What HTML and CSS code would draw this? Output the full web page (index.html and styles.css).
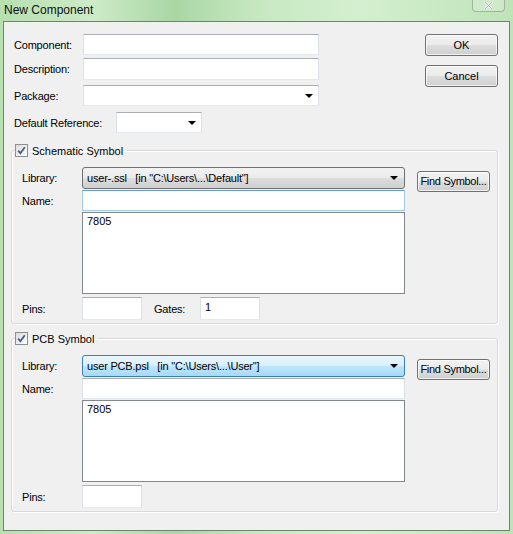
FILE: index.html
```html
<!DOCTYPE html>
<html lang="en">
<head>
    <meta charset="UTF-8">
    <title>New Component</title>
    <link rel="stylesheet" href="styles.css">
</head>
<body>
    <div class="titlebar">
        <span class="title">New Component</span>
        <span class="close">
            <svg width="11" height="9" viewBox="0 0 11 9"><path d="M2 1 L9 8 M9 1 L2 8" stroke="#f4f4f4" stroke-width="2.4"/><path d="M2 1 L9 8 M9 1 L2 8" stroke="#9aa79a" stroke-width="0.8"/></svg>
        </span>
    </div>

    <div class="client">
        <div class="top">
            <div class="fields">
                <div class="row r1">
                    <label class="lbl">Component:</label>
                    <div class="edit wide"></div>
                </div>
                <div class="row r2">
                    <label class="lbl">Description:</label>
                    <div class="edit wide tall"></div>
                </div>
                <div class="row r3">
                    <label class="lbl">Package:</label>
                    <div class="edit wide combo"><span class="arrow"></span></div>
                </div>
                <div class="row r4">
                    <label class="lbl ref">Default Reference:</label>
                    <div class="edit small combo"><span class="arrow"></span></div>
                </div>
            </div>
            <div class="actions">
                <button class="btn">OK</button>
                <button class="btn cancel">Cancel</button>
            </div>
        </div>

        <fieldset class="group">
            <legend>
                <span class="check"><svg width="9" height="9" viewBox="0 0 9 9"><path d="M1.2 4.6 L3.4 7.2 L7.8 1.2" fill="none" stroke="#4a5d8f" stroke-width="1.8"/></svg></span>
                Schematic Symbol
            </legend>
            <div class="grow lib">
                <label class="glbl">Library:</label>
                <div class="select"><span class="seltext">user-.ssl&nbsp;&nbsp;&nbsp;[in "C:\Users\...\Default"]</span><span class="arrow"></span></div>
                <button class="btn find">Find Symbol...</button>
            </div>
            <div class="grow name">
                <label class="glbl">Name:</label>
                <div class="edit field focus"></div>
            </div>
            <div class="list">7805</div>
            <div class="grow pins">
                <label class="glbl">Pins:</label>
                <div class="edit num"></div>
                <label class="gates">Gates:</label>
                <div class="edit num val">1</div>
            </div>
        </fieldset>

        <fieldset class="group pcb">
            <legend>
                <span class="check"><svg width="9" height="9" viewBox="0 0 9 9"><path d="M1.2 4.6 L3.4 7.2 L7.8 1.2" fill="none" stroke="#4a5d8f" stroke-width="1.8"/></svg></span>
                PCB Symbol
            </legend>
            <div class="grow lib">
                <label class="glbl">Library:</label>
                <div class="select hot"><span class="seltext">user PCB.psl&nbsp;&nbsp;&nbsp;[in "C:\Users\...\User"]</span><span class="arrow"></span></div>
                <button class="btn find">Find Symbol...</button>
            </div>
            <div class="grow name">
                <label class="glbl">Name:</label>
                <div class="edit field"></div>
            </div>
            <div class="list">7805</div>
            <div class="grow pins">
                <label class="glbl">Pins:</label>
                <div class="edit num"></div>
            </div>
        </fieldset>
    </div>
</body>
</html>
```

FILE: styles.css
```css
body {
    margin: 0;
    width: 513px;
    height: 534px;
    overflow: hidden;
    font-family: "Liberation Sans", Arial, sans-serif;
    font-size: 11px;
    color: #000;
    background: linear-gradient(to right, #b7dfb0 0%, #cdebc8 18%, #a9d6a3 34%, #c6e8c1 50%, #d4efcf 70%, #bfe3b9 100%);
}

/* title bar */
.titlebar {
    height: 21px;
    display: flex;
    align-items: flex-start;
    padding-left: 4px;
    box-sizing: border-box;
}

.title {
    font-size: 12px;
    margin-top: 3px;
    color: #111;
}

.close {
    margin-left: auto;
    margin-right: 8px;
    width: 33px;
    height: 12px;
    border: 1px solid #9fb59c;
    border-top: none;
    border-radius: 0 0 4px 4px;
    background: rgba(255, 255, 255, 0.2);
    display: flex;
    justify-content: center;
    align-items: flex-start;
    padding-top: 1px;
    box-sizing: border-box;
}

/* dialog body */
.client {
    margin: 0 3px;
    height: 510px;
    box-sizing: border-box;
    border: 1px solid #6d8669;
    background: #f0f0f0;
}

.top {
    display: flex;
    padding: 12px 11px 0 10px;
}

.fields {
    flex: 1;
}

.row {
    display: flex;
    align-items: center;
}

.r2 { margin-top: 3px; }
.r3 { margin-top: 5px; }
.r4 { margin-top: 6px; }

.lbl {
    width: 69px;
    letter-spacing: -0.2px;
}

.lbl.ref {
    width: 102px;
}

.edit {
    height: 21px;
    box-sizing: border-box;
    background: #fff;
    border: 1px solid #dbdfe6;
    border-top-color: #abadb3;
    border-bottom-color: #e3e9ef;
    position: relative;
}

.wide { width: 236px; }
.tall { height: 22px; }
.small { width: 86px; }

.combo .arrow {
    position: absolute;
    right: 5px;
    top: 8px;
}

.arrow {
    width: 0;
    height: 0;
    border-left: 4px solid transparent;
    border-right: 4px solid transparent;
    border-top: 4px solid #000;
}

.actions {
    display: flex;
    flex-direction: column;
    gap: 9px;
}

.btn {
    font-family: inherit;
    font-size: 11px;
    color: #000;
    border: 1px solid #707070;
    border-radius: 3px;
    background: linear-gradient(#f2f2f2 0%, #ebebeb 48%, #dddddd 52%, #cfcfcf 100%);
    box-shadow: inset 0 0 0 1px rgba(255, 255, 255, 0.7);
    padding: 0;
    width: 73px;
    height: 22px;
}

/* group boxes */
.group {
    margin: 11px 11px 0 7px;
    padding: 0 0 3px 0;
    border: 1px solid #d5d9dc;
    border-radius: 3px;
    min-width: 0;
    box-shadow: inset 1px 1px 0 #fff, 1px 1px 0 #fff;
}

.group.pcb {
    margin-top: 8px;
}

legend {
    display: flex;
    align-items: center;
    gap: 4px;
    margin-left: 3px;
    padding: 0 4px 0 0;
    height: 13px;
}

.check {
    width: 13px;
    height: 13px;
    box-sizing: border-box;
    border: 1px solid #8e8f8f;
    background: linear-gradient(135deg, #dcdcdc, #fdfdfd);
    display: flex;
    align-items: center;
    justify-content: center;
}

.grow {
    display: flex;
    align-items: center;
    padding-left: 10px;
}

.glbl {
    width: 60px;
    letter-spacing: -0.2px;
}

.lib {
    margin-top: 10px;
    height: 22px;
}

.select {
    width: 323px;
    height: 22px;
    box-sizing: border-box;
    border: 1px solid #707070;
    border-radius: 3px;
    background: linear-gradient(#f2f2f2 0%, #ebebeb 48%, #dddddd 52%, #cfcfcf 100%);
    display: flex;
    align-items: center;
    padding: 0 6px 0 4px;
}

.select.hot {
    border-color: #3c7fb1;
    background: linear-gradient(#eaf6fd 0%, #d9f0fc 48%, #bee6fd 52%, #a7d9f5 100%);
}

.seltext {
    flex: 1;
    white-space: nowrap;
    letter-spacing: -0.2px;
}

.find {
    width: 73px;
    height: 21px;
    margin-top: 6px;
    margin-left: 12px;
    letter-spacing: -0.3px;
}

.name {
    margin-top: 1px;
}

.field {
    width: 323px;
}

.field.focus {
    border-color: #a4c9e3;
    border-top-color: #6a9cc7;
}

.list {
    margin: 1px 0 0 70px;
    width: 323px;
    height: 82px;
    box-sizing: border-box;
    border: 1px solid #828790;
    background: #fff;
    padding: 2px 4px;
}

.pins {
    margin-top: 3px;
}

.num {
    width: 60px;
    height: 23px;
}

.gates {
    margin-left: 12px;
    width: 46px;
    letter-spacing: -0.2px;
}

.val {
    padding: 3px 4px;
}
```
